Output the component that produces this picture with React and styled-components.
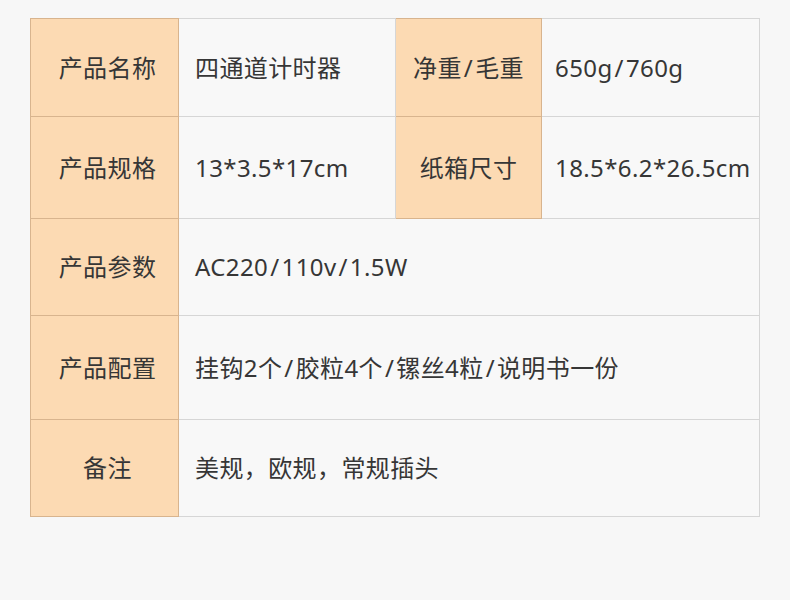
import React from 'react';
import styled, {createGlobalStyle} from 'styled-components';

const GlobalStyle = createGlobalStyle`
  html, body {
    margin: 0;
    padding: 0;
    background: #f7f7f7;
  }
  body {
    font-family: "Noto Sans", "Noto Sans CJK SC", sans-serif;
    color: #333333;
  }
`;

const Page = styled.div`
  width: 790px;
  height: 600px;
  padding: 18px 30px 0 30px;
  box-sizing: border-box;
`;

const SpecTable = styled.table`
  width: 729px;
  border-collapse: collapse;
  table-layout: fixed;
  font-size: 24px;
  line-height: 1;
`;

const Row = styled.tr`
  height: ${props => props.h}px;
`;

const Label = styled.td`
  background: #fcdab3;
  border: 1px solid #d8b48e;
  text-align: center;
  vertical-align: middle;
  padding: 0 0 0 ${props => props.shift || 0}px;
  color: #363636;
  letter-spacing: 0.4px;
`;

const Value = styled.td`
  background: #f8f8f8;
  border: 1px solid #d6d6d6;
  text-align: left;
  vertical-align: middle;
  padding: 0 0 0 ${props => props.pad || 16}px;
  color: #363636;
  white-space: nowrap;
  letter-spacing: 0.4px;
`;

const Slash = styled.span`
  margin: 0 2px;
`;

const withSlashes = text =>
  text.split('/').map((part, i) => (
    <React.Fragment key={i}>
      {i > 0 && <Slash>/</Slash>}
      {part}
    </React.Fragment>
  ));

const rows = [
  {h: 98, cells: [['产品名称', '四通道计时器'], ['净重/毛重', '650g/760g']]},
  {h: 102, cells: [['产品规格', '13*3.5*17cm'], ['纸箱尺寸', '18.5*6.2*26.5cm']]},
  {h: 97, cells: [['产品参数', 'AC220/110v/1.5W']]},
  {h: 104, cells: [['产品配置', '挂钩2个/胶粒4个/镙丝4粒/说明书一份']]},
  {h: 97, cells: [['备注', '美规，欧规，常规插头']]}
];

export default function App() {
  return (
    <Page>
      <GlobalStyle />
      <SpecTable>
        <colgroup>
          <col style={{width: '148px'}} />
          <col style={{width: '217px'}} />
          <col style={{width: '146px'}} />
          <col style={{width: '218px'}} />
        </colgroup>
        <tbody>
          {rows.map((row, i) => (
            <Row key={i} h={row.h}>
              {row.cells.length === 2 ? (
                <>
                  <Label shift={6}>{withSlashes(row.cells[0][0])}</Label>
                  <Value>{withSlashes(row.cells[0][1])}</Value>
                  <Label>{withSlashes(row.cells[1][0])}</Label>
                  <Value pad={13}>{withSlashes(row.cells[1][1])}</Value>
                </>
              ) : (
                <>
                  <Label shift={6}>{withSlashes(row.cells[0][0])}</Label>
                  <Value colSpan={3}>{withSlashes(row.cells[0][1])}</Value>
                </>
              )}
            </Row>
          ))}
        </tbody>
      </SpecTable>
    </Page>
  );
}
